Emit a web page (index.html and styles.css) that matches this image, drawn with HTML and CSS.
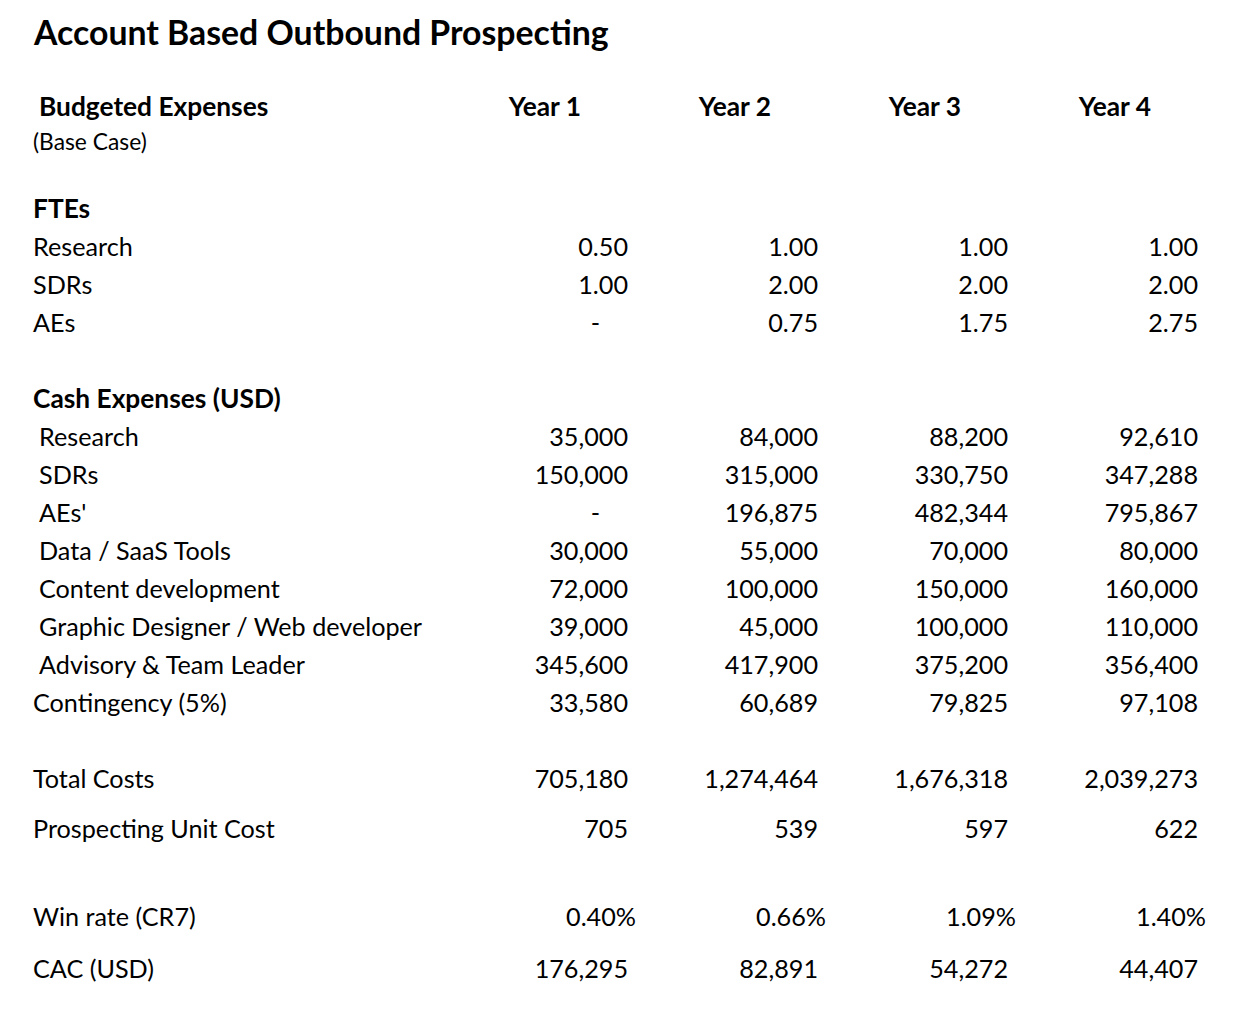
FILE: index.html
```html
<!DOCTYPE html>
<html lang="en">
<head>
<meta charset="utf-8">
<title>Account Based Outbound Prospecting</title>
<link rel="stylesheet" href="styles.css">
</head>
<body>
<main class="sheet">
  <h1 class="title">Account Based Outbound Prospecting</h1>

  <div class="row head">
    <div class="label bold indent">Budgeted Expenses</div>
    <div class="year">Year 1</div>
    <div class="year">Year 2</div>
    <div class="year">Year 3</div>
    <div class="year">Year 4</div>
  </div>
  <div class="row sub"><div class="label small">(Base Case)</div></div>

  <div class="row section"><div class="label bold">FTEs</div></div>
  <div class="row"><div class="label">Research</div><div class="num">0.50</div><div class="num">1.00</div><div class="num">1.00</div><div class="num">1.00</div></div>
  <div class="row"><div class="label">SDRs</div><div class="num">1.00</div><div class="num">2.00</div><div class="num">2.00</div><div class="num">2.00</div></div>
  <div class="row"><div class="label">AEs</div><div class="num dash">-</div><div class="num">0.75</div><div class="num">1.75</div><div class="num">2.75</div></div>

  <div class="row gap"><div class="label bold">Cash Expenses (USD)</div></div>
  <div class="row"><div class="label indent">Research</div><div class="num">35,000</div><div class="num">84,000</div><div class="num">88,200</div><div class="num">92,610</div></div>
  <div class="row"><div class="label indent">SDRs</div><div class="num">150,000</div><div class="num">315,000</div><div class="num">330,750</div><div class="num">347,288</div></div>
  <div class="row"><div class="label indent">AEs'</div><div class="num dash">-</div><div class="num">196,875</div><div class="num">482,344</div><div class="num">795,867</div></div>
  <div class="row"><div class="label indent">Data / SaaS Tools</div><div class="num">30,000</div><div class="num">55,000</div><div class="num">70,000</div><div class="num">80,000</div></div>
  <div class="row"><div class="label indent">Content development</div><div class="num">72,000</div><div class="num">100,000</div><div class="num">150,000</div><div class="num">160,000</div></div>
  <div class="row"><div class="label indent">Graphic Designer / Web developer</div><div class="num">39,000</div><div class="num">45,000</div><div class="num">100,000</div><div class="num">110,000</div></div>
  <div class="row"><div class="label indent">Advisory &amp; Team Leader</div><div class="num">345,600</div><div class="num">417,900</div><div class="num">375,200</div><div class="num">356,400</div></div>
  <div class="row"><div class="label">Contingency (5%)</div><div class="num">33,580</div><div class="num">60,689</div><div class="num">79,825</div><div class="num">97,108</div></div>

  <div class="row gap"><div class="label">Total Costs</div><div class="num">705,180</div><div class="num">1,274,464</div><div class="num">1,676,318</div><div class="num">2,039,273</div></div>
  <div class="row near"><div class="label">Prospecting Unit Cost</div><div class="num">705</div><div class="num">539</div><div class="num">597</div><div class="num">622</div></div>

  <div class="row far"><div class="label">Win rate (CR7)</div><div class="num pct">0.40%</div><div class="num pct">0.66%</div><div class="num pct">1.09%</div><div class="num pct">1.40%</div></div>
  <div class="row near2"><div class="label">CAC (USD)</div><div class="num">176,295</div><div class="num">82,891</div><div class="num">54,272</div><div class="num">44,407</div></div>
</main>
</body>
</html>
```

FILE: styles.css
```css
html, body {
  margin: 0;
  padding: 0;
  background: #ffffff;
}

body {
  font-family: Lato, "Open Sans", sans-serif;
  color: #000000;
  width: 1238px;
  height: 1024px;
  overflow: hidden;
}

.sheet {
  padding: 13px 0 0 33px;
  display: flex;
  flex-direction: column;
}

.title {
  margin: 0 0 36px 1px;
  height: 38px;
  line-height: 38px;
  font-size: 33.8px;
  font-weight: 700;
  letter-spacing: 0;
}

.row {
  display: grid;
  grid-template-columns: 405px repeat(4, 190px);
  height: 38px;
  align-items: center;
  font-size: 25.2px;
  line-height: 38px;
  white-space: nowrap;
}

.row.sub {
  height: 32px;
  line-height: 32px;
}

.row.section { margin-top: 32px; }
.row.gap { margin-top: 38px; }
.row.near { margin-top: 12px; }
.row.far { margin-top: 50px; }
.row.near2 { margin-top: 14px; }

.label.indent { padding-left: 6px; }
.bold { font-weight: 700; font-size: 26.3px; }
.small { font-size: 22.8px; }

.year {
  font-weight: 700;
  font-size: 26.3px;
  text-align: right;
  padding-right: 47px;
}

.num {
  text-align: right;
}

.num.dash {
  padding-right: 28px;
}

.num.pct {
  margin-right: -8px;
}
```
